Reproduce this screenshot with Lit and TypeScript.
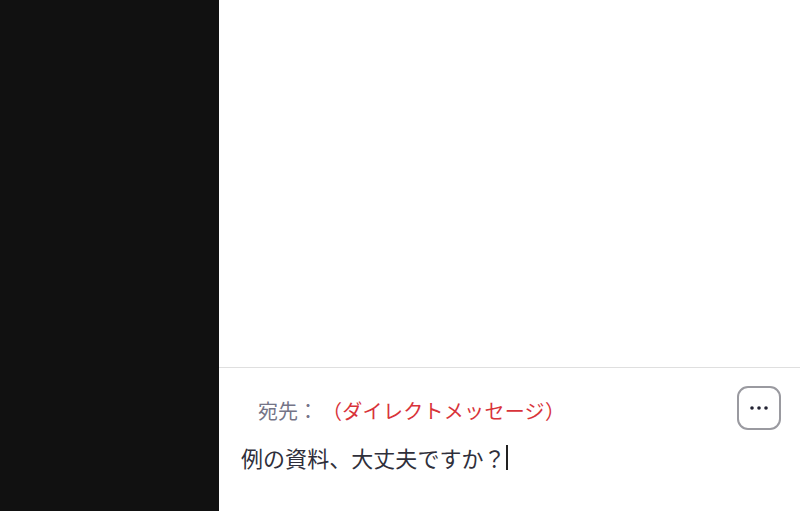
import { LitElement, html, css } from "lit";
import { customElement } from "lit/decorators.js";

@customElement("app-root")
export class AppRoot extends LitElement {
  static styles = css`
    :host { display: flex; width: 800px; height: 511px; overflow: hidden; background: #fff;
      font-family: "Noto Sans CJK JP", "Liberation Sans", sans-serif; }
    .side { width: 219px; flex: none; background: #111111; }
    .main { flex: 1; display: flex; flex-direction: column; min-width: 0; }
    .msgs { flex: 1; }
    .composer { height: 144px; flex: none; box-sizing: border-box; border-top: 1px solid #dfdfdf;
      padding: 18px 19px 0 22px; display: flex; flex-direction: column; }
    .to { display: flex; align-items: center; height: 44px; padding-left: 17px; font-size: 20px; line-height: 28px; }
    .label { color: #747487; width: 64px; flex: none; padding-top: 6px; }
    .target { color: #d8333a; flex: 1; letter-spacing: 0.3px; padding-top: 6px; }
    .more { width: 44px; height: 44px; box-sizing: border-box; border: 2px solid #9a9aa0; border-radius: 11px;
      display: flex; align-items: center; justify-content: center; }
    .text { font-size: 22px; color: #2f2f3b; display: flex; align-items: center; height: 32px; margin-top: 11px; letter-spacing: 0.05px; }
    .caret { width: 2px; height: 25px; background: #222; }
  `;
  render() {
    return html`
      <div class="side"></div>
      <div class="main">
        <div class="msgs"></div>
        <div class="composer">
          <div class="to">
            <span class="label">宛先：</span>
            <span class="target">（ダイレクトメッセージ）</span>
            <div class="more">
              <svg width="20" height="4" viewBox="0 0 20 4"><circle cx="3" cy="2" r="1.8" fill="#232333"/><circle cx="10" cy="2" r="1.8" fill="#232333"/><circle cx="17" cy="2" r="1.8" fill="#232333"/></svg>
            </div>
          </div>
          <div class="text">例の資料、大丈夫ですか？<span class="caret"></span></div>
        </div>
      </div>
    `;
  }
}
